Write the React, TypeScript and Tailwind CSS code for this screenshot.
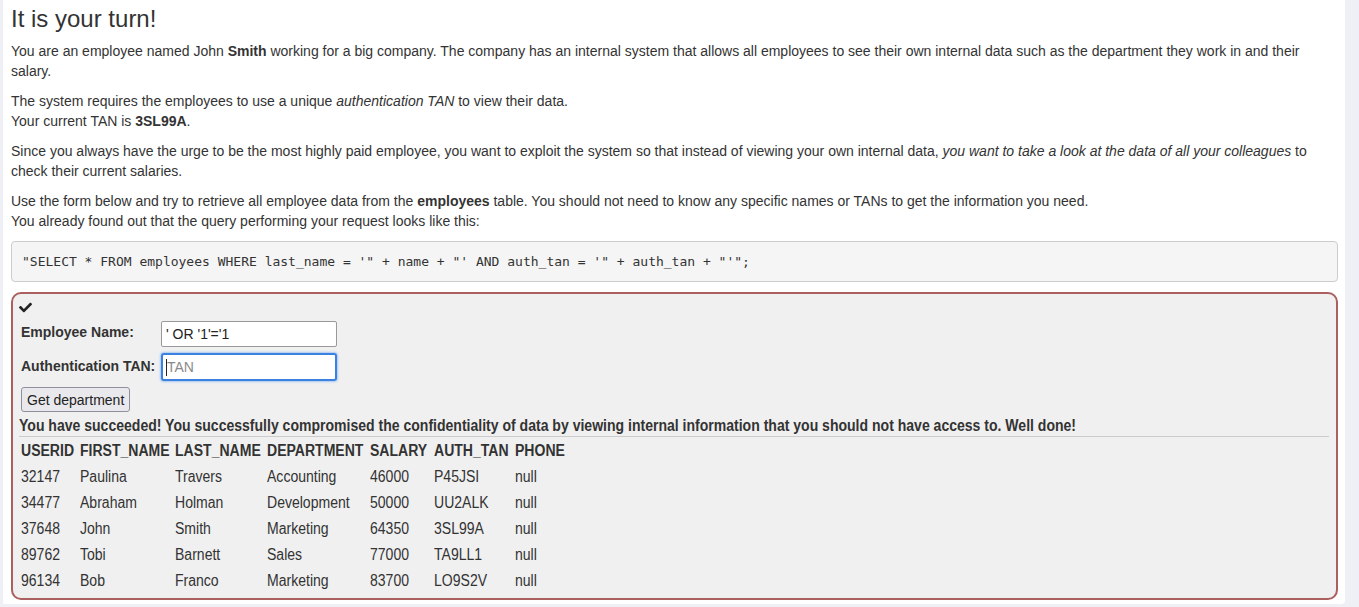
import React from "react";

const rows = [
  ["32147", "Paulina", "Travers", "Accounting", "46000", "P45JSI", "null"],
  ["34477", "Abraham", "Holman", "Development", "50000", "UU2ALK", "null"],
  ["37648", "John", "Smith", "Marketing", "64350", "3SL99A", "null"],
  ["89762", "Tobi", "Barnett", "Sales", "77000", "TA9LL1", "null"],
  ["96134", "Bob", "Franco", "Marketing", "83700", "LO9S2V", "null"],
];

const headers = ["USERID", "FIRST_NAME", "LAST_NAME", "DEPARTMENT", "SALARY", "AUTH_TAN", "PHONE"];
const colWidths = ["w-[59px]", "w-[95px]", "w-[92px]", "w-[103px]", "w-[64px]", "w-[81px]", "w-[60px]"];

// the result area uses a narrow face; squeeze Liberation Sans to match
function Narrow({ children }: { children: React.ReactNode }) {
  return <span className="inline-block whitespace-nowrap scale-x-[0.877] origin-left">{children}</span>;
}

export default function App() {
  return (
    <div className="h-[607px] bg-[#eef0f5] pl-[3px] pr-[14px] pb-[3px] font-['Liberation_Sans',Arial,sans-serif] text-[14px] leading-[20px] text-[#333]">
      <div className="h-full bg-white rounded-br-[4px] pl-[8px] pr-[7px] pt-[5px]">
        {/* Header */}
        <h2 className="text-[24px] leading-[28px] font-normal mb-[8px]">It is your turn!</h2>

        <p className="mb-[10px]">
          You are an employee named John <b>Smith</b> working for a big company. The company has an internal
          system that allows all employees to see their own internal data such as the department they work in and
          their salary.
        </p>
        <p className="mb-[10px]">
          The system requires the employees to use a unique <i>authentication TAN</i> to view their data.
          <br />
          Your current TAN is <b>3SL99A</b>.
        </p>
        <p className="mb-[10px]">
          Since you always have the urge to be the most highly paid employee, you want to exploit the system so
          that instead of viewing your own internal data, <i>you want to take a look at the data of all your colleagues</i>{" "}
          to check their current salaries.
        </p>
        <p className="mb-[10px]">
          Use the form below and try to retrieve all employee data from the <b>employees</b> table. You should not
          need to know any specific names or TANs to get the information you need.
          <br />
          You already found out that the query performing your request looks like this:
        </p>

        {/* Query */}
        <pre className="mb-[10px] h-[41px] px-[10px] pt-[11px] bg-[#f5f5f5] border border-[#ccc] rounded-[4px] font-['DejaVu_Sans_Mono',monospace] text-[13px] leading-[18px] text-[#333]">
          "SELECT * FROM employees WHERE last_name = '" + name + "' AND auth_tan = '" + auth_tan + "'";
        </pre>

        {/* Assignment box */}
        <div className="h-[308px] border-2 border-[#ab5f5e] rounded-[10px] bg-[#f0f0f0] px-[6px] pt-[7px]">
          <svg viewBox="0 0 512 512" className="w-[13px] h-[13px] fill-[#222]">
            <path d="M173.9 439.4L7.5 273c-10-10-10-26.2 0-36.2l36.2-36.2c10-10 26.2-10 36.2 0L192 312.7 432.1 72.6c10-10 26.2-10 36.2 0l36.2 36.2c10 10 10 26.2 0 36.2L210.1 439.4c-10 10-26.2 10-36.2 0z" />
          </svg>

          <div className="pl-[2px] mt-[7px] grid grid-cols-[140px_176px] gap-y-[6px] items-center">
            <label className="font-bold leading-[20px] -mt-[4px]">Employee Name:</label>
            <input
              readOnly
              value="' OR '1'='1"
              className="h-[26px] bg-white border border-[#999] rounded-[2px] px-[4px] text-[14px] text-[#222] font-['Liberation_Sans',Arial,sans-serif] outline-none"
            />
            <label className="font-bold leading-[20px] -mt-[3px]">Authentication TAN:</label>
            <div className="h-[28px] rounded-[3px] border-2 border-[#3b82e0] shadow-[0_0_2px_1px_#a9c8f0] bg-white flex items-center pl-[3px]">
              <span className="w-[1px] h-[17px] bg-[#222]" />
              <span className="text-[#8a8a8a] text-[14px]">TAN</span>
            </div>
          </div>

          <button className="ml-[2px] mt-[6px] h-[25px] px-[5px] bg-[#e9e9ed] border border-[#8f8f9d] rounded-[3px] text-[14px] text-[#222] leading-[20px]">
            Get department
          </button>

          {/* Result */}
          <div className="mt-[4px] font-bold text-[16px] leading-[20px] text-[#333]">
            <Narrow>
              You have succeeded! You successfully compromised the confidentiality of data by viewing internal
              information that you should not have access to. Well done!
            </Narrow>
          </div>
          <div className="h-px bg-[#ccc] mr-[1px]" />

          <table className="table-fixed w-[554px] border-separate border-spacing-0 ml-[2px] mt-[1px] text-[16px] text-[#333]">
            <thead>
              <tr className="h-[26px]">
                {headers.map((h, i) => (
                  <th key={h} className={`${colWidths[i]} text-left font-bold p-0`}>
                    <Narrow>{h}</Narrow>
                  </th>
                ))}
              </tr>
            </thead>
            <tbody>
              {rows.map((r) => (
                <tr key={r[0]} className="h-[26px]">
                  {r.map((c, i) => (
                    <td key={i} className={`${colWidths[i]} p-0`}>
                      <Narrow>{c}</Narrow>
                    </td>
                  ))}
                </tr>
              ))}
            </tbody>
          </table>
        </div>
      </div>
    </div>
  );
}
